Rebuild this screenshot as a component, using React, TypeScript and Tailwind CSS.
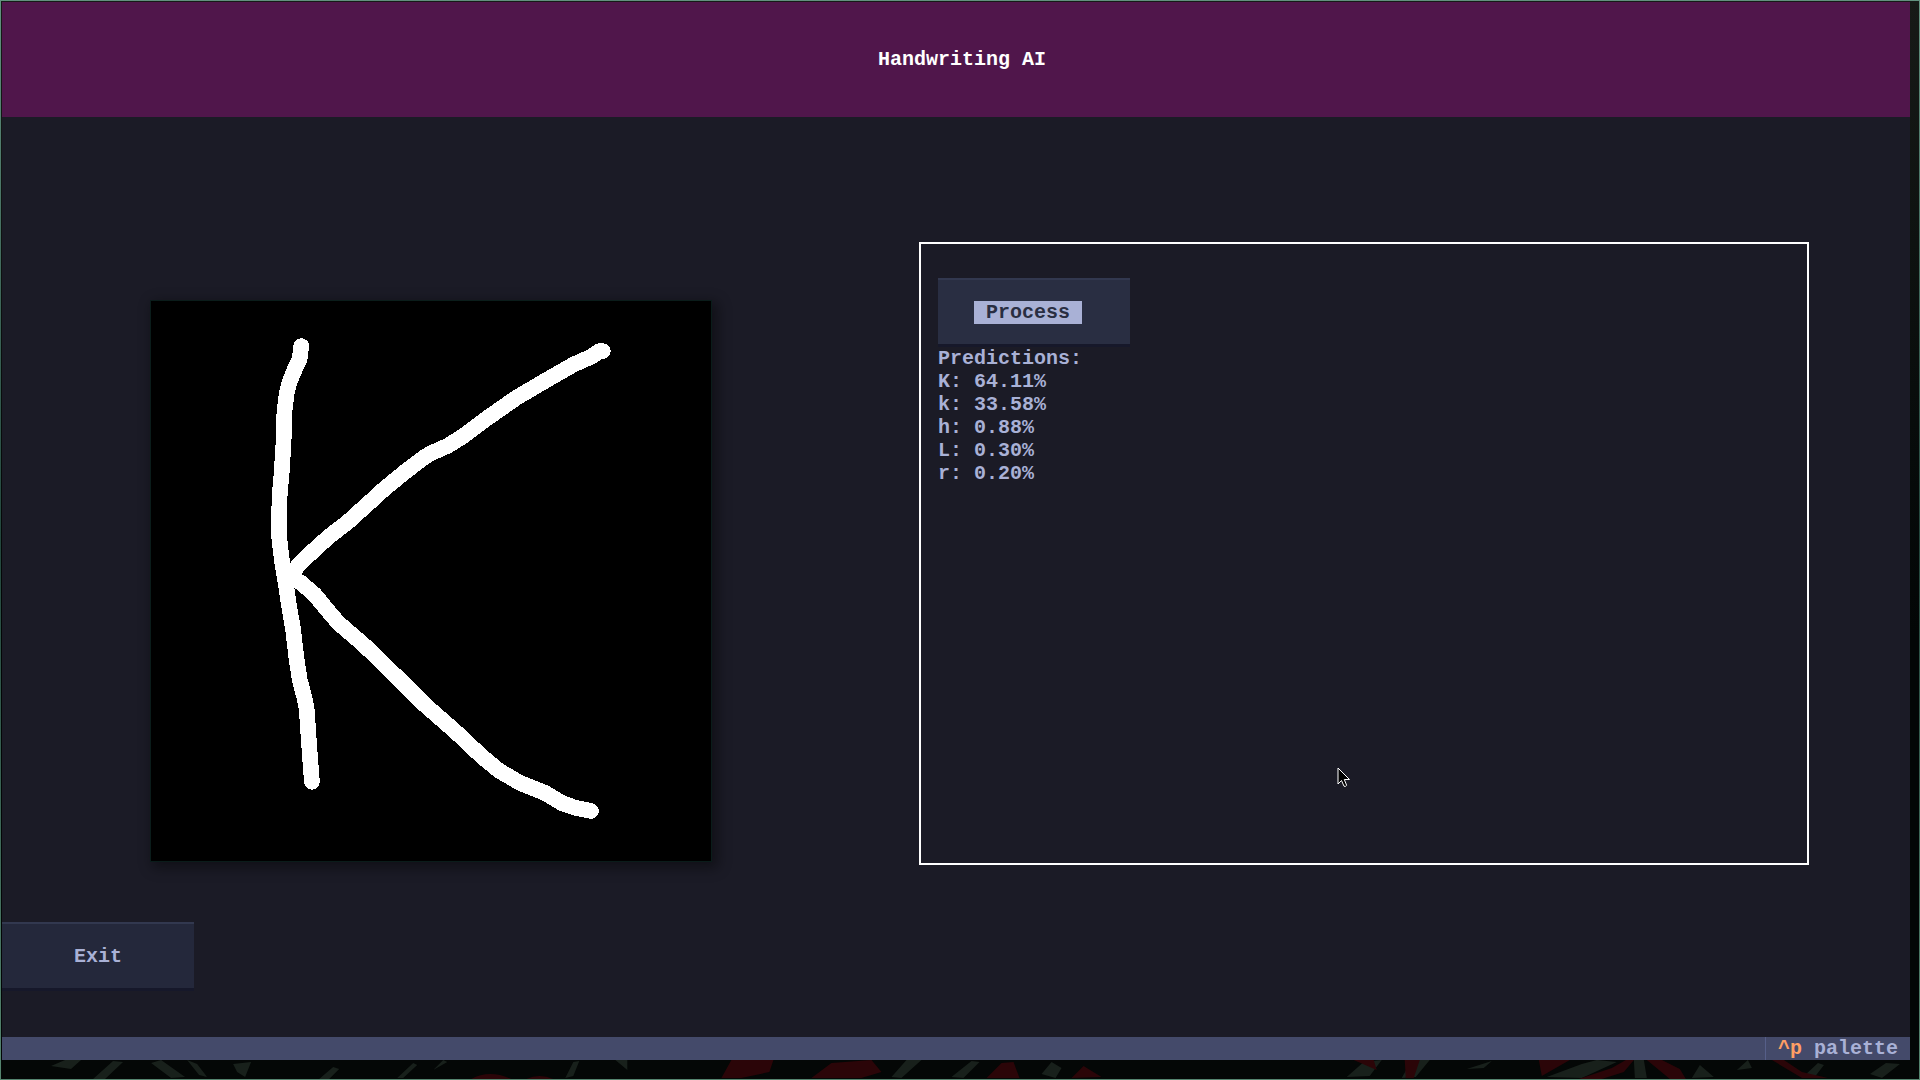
import React from "react";

const predictions = [
  { label: "K", score: "64.11%" },
  { label: "k", score: "33.58%" },
  { label: "h", score: "0.88%" },
  { label: "L", score: "0.30%" },
  { label: "r", score: "0.20%" },
];

function DrawingCanvas() {
  return (
    <div className="aspect-square w-[562px] shrink-0 self-start border border-[#0a1c1a] bg-black shadow-[4px_4px_12px_2px_rgba(0,0,0,0.4)]">
      <svg
        viewBox="54 54 1465 1465"
        className="block h-full w-full"
        fill="none"
        stroke="#fff"
        strokeWidth="41"
        strokeLinecap="round"
        strokeLinejoin="round"
        shapeRendering="crispEdges"
        role="img"
        aria-label="Handwritten character"
      >
        <path d="M447 172L443 205L426 242L416 268L409 295L403 345L401 420L396 500L390 570L389 670L397 738L406 790L415 850L426 915L434 985L443 1045L455 1090L461 1118L466 1190L471 1260L475 1312" />
        <path d="M410 782L440 745L480 706L520 670L568 633L620 586L665 545L720 500L770 462L785 453L830 433L870 408L930 363L1010 307L1090 260L1160 220L1205 200L1228 185L1236 185" />
        <path d="M415 775L445 790L482 822L520 868L545 897L610 953L700 1040L770 1110L850 1180L920 1246L965 1283L1020 1315L1085 1341L1130 1368L1165 1380L1205 1388" />
      </svg>
    </div>
  );
}

function Cursor() {
  return (
    <svg
      viewBox="0 0 14 22"
      className="pointer-events-none absolute top-[523px] left-[416px] h-[22px] w-[14px]"
      aria-hidden="true"
    >
      <path
        d="M1 1V17L4.5 13.5L7 19.2Q8.5 20.3 9.6 18.2L7.3 12.5H12.5Z"
        fill="#000"
        stroke="#fff"
        strokeWidth="1"
      />
    </svg>
  );
}

function WallpaperStrip() {
  return (
    <svg
      viewBox="0 0 1917 19"
      preserveAspectRatio="none"
      className="block h-[19px] w-full"
      aria-hidden="true"
    >
      <g fill="#18201b">
        <path d="M50 6L64 0L80 0L70 9ZM92 19L112 1L122 2L104 19ZM150 3L160 0L184 17L170 18ZM186 0L196 4L206 17L198 15ZM232 4L250 2L244 17L236 12ZM318 19L332 7L338 9L328 19ZM396 18L412 3L416 5L402 18ZM432 10L442 0L446 2ZM564 18L572 2L578 1L572 16ZM614 0H626V10ZM890 17L905 0L920 0L900 18ZM950 17L970 1L978 2L962 18ZM1040 14L1050 2L1060 8L1054 18Z" />
        <path d="M1345 17L1362 2L1380 0L1368 16ZM1410 0L1428 0L1414 17L1400 18ZM1465 9L1490 1L1482 8ZM1545 17L1580 4L1595 0L1615 2L1580 18ZM1632 0H1642L1645 18H1633ZM1690 18L1698 5L1712 17ZM1735 10L1746 0L1750 8ZM1800 18L1816 3L1822 5L1812 18ZM1868 14L1884 3L1898 4L1880 18Z" />
      </g>
      <g fill="#2b0508">
        <path d="M470 19Q488 9 510 19ZM525 19Q538 13 552 19ZM720 18L730 0H772L768 12L740 18ZM810 18L830 3L870 0L880 12L860 18ZM985 18L1000 3L1012 2L1018 18ZM1070 18L1082 6L1100 17Z" />
        <path d="M1352 0H1372L1375 10ZM1403 0H1418L1412 18H1404ZM1537 0H1568L1540 16ZM1577 19L1610 8L1624 0H1632L1622 12L1600 19ZM1645 0H1660L1678 9L1684 19H1668ZM1770 0H1782L1800 12L1826 18H1800Z" />
      </g>
    </svg>
  );
}

export default function App() {
  return (
    <div className="flex min-h-screen flex-col bg-linear-to-b from-[#62917f] via-[#23473d] to-[#55856f] p-px font-['Liberation_Mono',monospace] text-[20px] leading-[23px] font-bold text-[#a9b1d6]">
      <div className="flex flex-1 flex-col bg-[#040706]">
        <div className="flex flex-1 flex-col bg-linear-to-b from-[#171a17] to-[#030606] to-60% pt-px pr-[9px] pl-px">
          <header className="flex h-[115px] items-center justify-center bg-[#50164b] pl-3 text-white">
            <h1>Handwriting AI</h1>
          </header>
          <main className="flex flex-1 flex-col bg-[#1b1b26] pb-[46px]">
            <section className="flex flex-1 gap-[207px] pt-[125px] pr-[101px] pb-[57px] pl-[148px]">
              <div className="pt-[58px]">
                <DrawingCanvas />
              </div>
              <div className="relative flex flex-1 flex-col items-start border-2 border-white px-[17px] pt-[34px]">
                <button className="flex h-[69px] w-[192px] items-center justify-center border-t-2 border-b-3 border-t-[#32384f] border-b-[#16182a] bg-[#292e42] pr-3">
                  <span className="bg-[#a9b1d6] px-3 text-[#292e42]">
                    Process
                  </span>
                </button>
                <p>Predictions:</p>
                <ul>
                  {predictions.map((p) => (
                    <li key={p.label}>
                      {p.label}: {p.score}
                    </li>
                  ))}
                </ul>
                <Cursor />
              </div>
            </section>
            <button className="flex h-[69px] w-[192px] items-center justify-center border-t-2 border-b-3 border-t-[#32384f] border-b-[#16182a] bg-[#24283b]">
              Exit
            </button>
          </main>
          <footer className="flex justify-end bg-[#444a6a]">
            <button className="flex gap-3 border-l border-[#565f89] px-3">
              <span className="text-[#ff9e64]">^p</span>
              <span>palette</span>
            </button>
          </footer>
        </div>
        <WallpaperStrip />
      </div>
    </div>
  );
}
